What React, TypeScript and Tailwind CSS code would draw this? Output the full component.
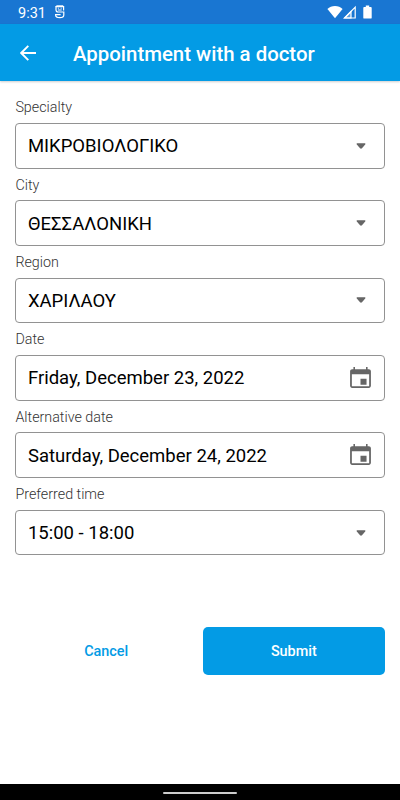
import React, { useState } from 'react';

interface Field {
  id: string;
  label: string;
  value: string;
  type: 'select' | 'date';
}

const fields: Field[] = [
  { id: 'specialty', label: 'Specialty', value: 'ΜΙΚΡΟΒΙΟΛΟΓΙΚΟ', type: 'select' },
  { id: 'city', label: 'City', value: 'ΘΕΣΣΑΛΟΝΙΚΗ', type: 'select' },
  { id: 'region', label: 'Region', value: 'ΧΑΡΙΛΑΟΥ', type: 'select' },
  { id: 'date', label: 'Date', value: 'Friday, December 23, 2022', type: 'date' },
  { id: 'altDate', label: 'Alternative date', value: 'Saturday, December 24, 2022', type: 'date' },
  { id: 'time', label: 'Preferred time', value: '15:00 - 18:00', type: 'select' },
];

const StatusBar: React.FC = () => (
  <div className="flex h-6 shrink-0 items-center bg-[#1976d2] pl-[18px] pr-[28px] text-white">
    <span className="w-[28px] pt-[4px] text-[14.5px] leading-none">9:31</span>
    <svg className="ml-[8px] h-[14px] w-[12px]" viewBox="0 0 12 14" fill="none" stroke="currentColor" strokeWidth="1.2">
      <path d="M9.6 5.5V1.6H2v3.2C2 6.3 2.800 7 4.200 7h5.600v3c0 1.800-1.400 2.700-4 2.700s-4.200-.9-4.200-2.700V9.700h5" />
      <path d="M2 1.600 2.500.8h6.600l.5.800M3.900 3.200h1M6.700 3.200h1M3.900 5h3.800" strokeWidth="1" />
    </svg>
    <div className="ml-auto flex items-center">
      <svg className="h-[14px] w-[16px]" viewBox="0 0 16 14" fill="currentColor">
        <path d="M8 13.200.4 3.900C2.400 2 5 .9 8 .9s5.600 1.100 7.600 3z" />
      </svg>
      <svg className="h-[14px] w-[13px]" viewBox="0 0 13 14" fill="none" stroke="currentColor" strokeWidth="1.2">
        <path d="M1.600 13 12.200 2.200V13z" />
        <path d="M8 6.500V13H1.600z" fill="currentColor" fillOpacity="0.3" />
      </svg>
      <svg className="ml-[7px] h-[14px] w-[9px]" viewBox="0 0 9 14" fill="currentColor">
        <path d="M2.800.6h3.400v1.300h1.600c.5 0 .9.4.9.9v9.900c0 .5-.4.9-.9.9H1.200a.9.900 0 0 1-.9-.9V2.800c0-.5.4-.9.900-.9h1.600z" />
      </svg>
    </div>
  </div>
);

const CalendarIcon: React.FC = () => (
  <svg className="mt-px h-[25px] w-[25px]" viewBox="0 0 24 24" fill="#666666">
    <path d="M17.800 12.300h-5.800v5.600h5.800v-5.600zM17.300 1v2H6.700V1H5.200v2H4C2.900 3 2 3.900 2 5v14c0 1.100.9 2 2 2h16c1.100 0 2-.9 2-2V5c0-1.100-.9-2-2-2h-1.200V1zM20.300 19.400H3.700V8h16.600z" />
  </svg>
);

const ArrowIcon: React.FC = () => (
  <svg className="mr-[7px] h-[6px] w-[10px]" viewBox="0 0 10 6" fill="#666666">
    <path d="M1.300.3h7.400c.7 0 .9.7.5 1.200L6 5.200c-.6.600-1.400.6-2 0L.8 1.500C.4 1 .6.3 1.300.3z" />
  </svg>
);

const FormField: React.FC<Field & { onOpen: () => void }> = ({ id, label, value, type, onOpen }) => (
  <div className="flex h-[77.35px] flex-col">
    <label htmlFor={id} className="flex flex-1 items-center pt-[2px] text-[14.3px] font-light text-[#333333]">
      {label}
    </label>
    <button
      id={id}
      type="button"
      onClick={onOpen}
      className="flex h-[45.5px] items-center justify-between rounded-[4px] border border-[#929292] pl-[11.5px] pr-[11px] text-left text-[18.5px] text-black"
    >
      <span className="pt-[3px]">{value}</span>
      {type === 'date' ? <CalendarIcon /> : <ArrowIcon />}
    </button>
  </div>
);

const App: React.FC = () => {
  const [, setActiveField] = useState<string>('');

  return (
    <div className="flex h-[800px] w-[400px] flex-col overflow-hidden bg-white font-[Roboto,sans-serif]">
      <StatusBar />
      <header className="flex h-[57px] shrink-0 items-center bg-[#039be5] pl-[20px] text-white shadow-[0_1px_2px_rgba(0,0,0,0.2)]">
        <button type="button" aria-label="Back">
          <svg className="h-4 w-4" viewBox="0 0 16 16" fill="none" stroke="currentColor" strokeWidth="1.9">
            <path d="M16 8H1.500M8.300.9 1.200 8l7.100 7.100" />
          </svg>
        </button>
        <h1 className="ml-[37px] pt-[4px] text-[20.4px] font-medium">Appointment with a doctor</h1>
      </header>

      <main className="flex flex-1 flex-col px-[15.4px] pt-[10.2px]">
        {fields.map((field) => (
          <FormField key={field.id} {...field} onOpen={() => setActiveField(field.id)} />
        ))}
        <div className="mt-[71.3px] flex h-[48px] gap-[6px] text-[14.4px] font-medium">
          <button type="button" className="flex-1 pt-[2px] text-[#039be5]">
            Cancel
          </button>
          <button type="button" className="flex-1 rounded-[5px] bg-[#039be5] pt-[2px] text-white">
            Submit
          </button>
        </div>
      </main>

      <footer className="flex h-4 shrink-0 items-center justify-center bg-black pt-[2px]">
        <div className="h-[2px] w-[74px] rounded-full bg-[#cccccc]" />
      </footer>
    </div>
  );
};

export default App;
